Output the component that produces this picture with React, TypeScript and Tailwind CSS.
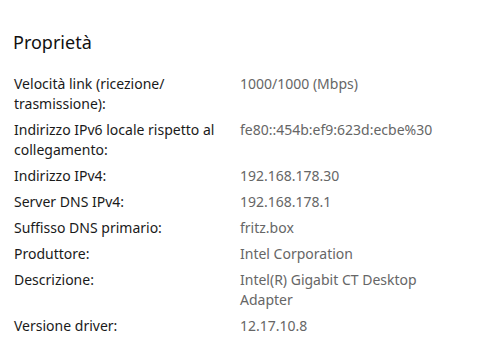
import React from 'react';

const rows: { label: string; value: string }[] = [
  { label: 'Velocità link (ricezione/\u200Btrasmissione):', value: '1000/1000 (Mbps)' },
  { label: 'Indirizzo IPv6 locale rispetto al collegamento:', value: 'fe80::454b:ef9:623d:ecbe%30' },
  { label: 'Indirizzo IPv4:', value: '192.168.178.30' },
  { label: 'Server DNS IPv4:', value: '192.168.178.1' },
  { label: 'Suffisso DNS primario:', value: 'fritz.box' },
  { label: 'Produttore:', value: 'Intel Corporation' },
  { label: 'Descrizione:', value: 'Intel(R) Gigabit CT Desktop Adapter' },
  { label: 'Versione driver:', value: '12.17.10.8' },
];

export default function App() {
  return (
    <div className="w-[479px] h-[339px] bg-white overflow-hidden px-[14px] pt-[28px] font-['Noto_Sans',sans-serif]">
      <h2 className="text-[18px] leading-[28px] text-[#111] font-normal -ml-px">Proprietà</h2>

      {/* elenco proprietà */}
      <div className="mt-[18px] grid grid-cols-[212px_200px] gap-x-[14px] gap-y-[6px] text-[14px] leading-5">
        {rows.map((r) => (
          <React.Fragment key={r.label}>
            <div className="text-[#1a1a1a]">{r.label}</div>
            <div className="text-[#666]">{r.value}</div>
          </React.Fragment>
        ))}
      </div>
    </div>
  );
}
